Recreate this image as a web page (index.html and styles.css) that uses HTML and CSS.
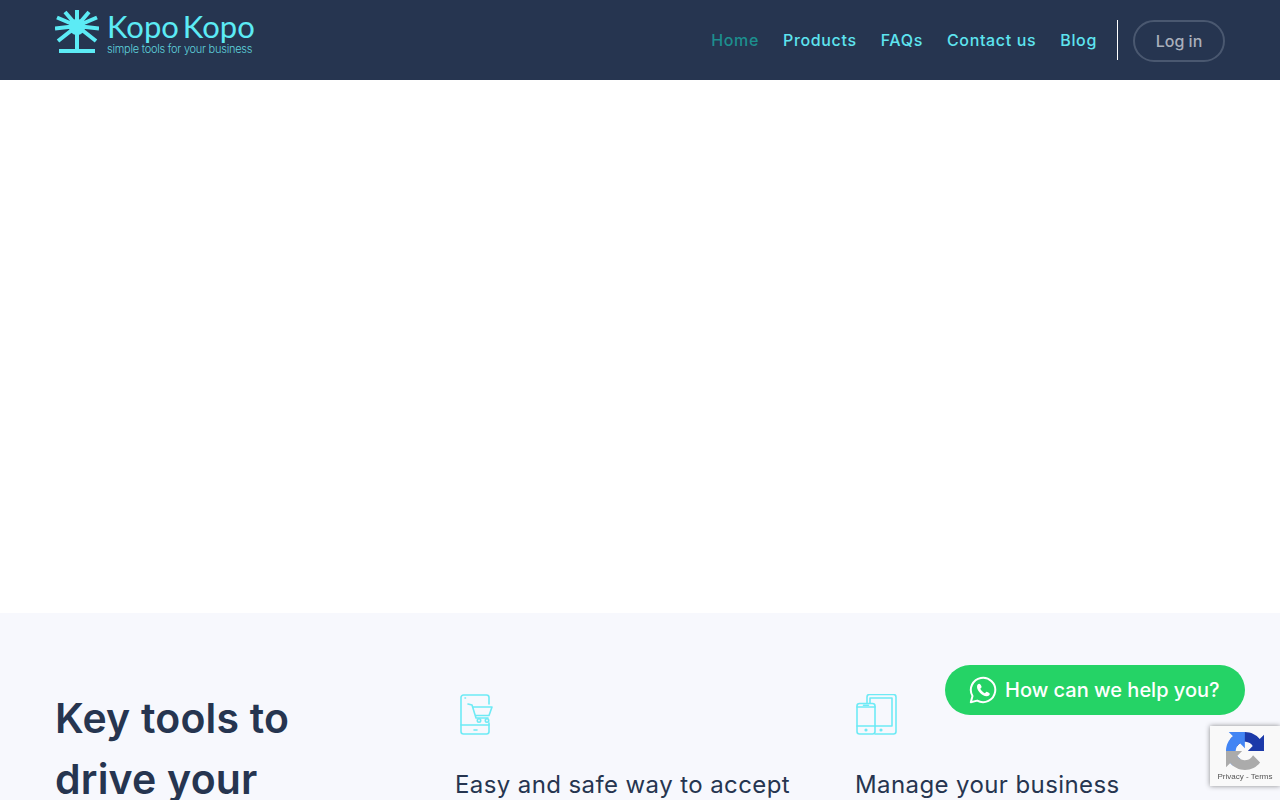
FILE: index.html
```html
<!DOCTYPE html>
<html lang="en">
<head>
  <meta charset="UTF-8" />
  <title>Kopo Kopo</title>
  <link rel="stylesheet" href="styles.css">
</head>
<body>
  <header class="topbar">
    <a class="brand" href="#">
      <svg class="brand-mark" viewBox="0 0 44 44" fill="none" stroke="#5cebf5" stroke-width="4">
        <path d="M22 0V41M22 16L10 2M22 16L34 2M22 16L2 7.500M22 16L42 7.500M22 16L0 18.500M22 16L44 18.500M22 16L3 31M22 16L41 31"/>
        <circle cx="22" cy="17" r="8" fill="#5cebf5" stroke="none"/>
        <path d="M4 41H40" stroke-width="4"/>
      </svg>
      <span class="brand-text">
        <span class="brand-name">Kopo Kopo</span>
        <span class="brand-tag">simple tools for your business</span>
      </span>
    </a>
    <nav class="nav">
      <a class="nav-link active" href="#">Home</a>
      <a class="nav-link" href="#">Products</a>
      <a class="nav-link" href="#">FAQs</a>
      <a class="nav-link" href="#">Contact us</a>
      <a class="nav-link" href="#">Blog</a>
      <span class="nav-divider"></span>
      <a class="login-btn" href="#">Log in</a>
    </nav>
  </header>

  <section class="hero"></section>

  <section class="tools">
    <h2 class="tools-title">Key tools to drive your</h2>
    <div class="tool">
      <svg class="tool-icon" viewBox="0 0 40 42" fill="none" stroke="#6eeaf5" stroke-width="1.600" stroke-linecap="round" stroke-linejoin="round">
        <path d="M34 10V3.500A2.500 2.500 0 0 0 31.500 1H8.500A2.500 2.500 0 0 0 6 3.500V37.500A2.500 2.500 0 0 0 8.500 40H31.500A2.500 2.500 0 0 0 34 37.500V29"/>
        <path d="M6 31H34M19 36H22M10 4H10.500"/>
        <path d="M13 10L17 11L21 24H33M18 13H37L34 21.500H20.500"/>
        <circle cx="24" cy="26.500" r="1.700"/>
        <circle cx="32" cy="26.500" r="1.700"/>
      </svg>
      <p class="tool-text">Easy and safe way to accept</p>
    </div>
    <div class="tool">
      <svg class="tool-icon" viewBox="0 0 42 42" fill="none" stroke="#6eeaf5" stroke-width="1.600" stroke-linecap="round" stroke-linejoin="round">
        <path d="M12 9V3A2.500 2.500 0 0 1 14.500 0.500H38.500A2.500 2.500 0 0 1 41 3V37.500A2.500 2.500 0 0 1 38.500 40H20"/>
        <path d="M15 9V4H37V32H20"/>
        <rect x="2" y="9.500" width="18" height="30.500" rx="2.500"/>
        <path d="M2 13H20M2 32H20M8.500 11.300H13.500"/>
        <circle cx="11" cy="36" r="0.800"/>
        <circle cx="26" cy="36" r="0.800"/>
      </svg>
      <p class="tool-text">Manage your business</p>
    </div>
  </section>

  <a class="whatsapp" href="#">
    <svg class="whatsapp-icon" viewBox="0 0 28 28" fill="none">
      <path d="M1.800 26.300L3.500 20A12.200 12.200 0 1 1 8.200 24.600Z" stroke="#fff" stroke-width="2" stroke-linejoin="round"/>
      <path d="M10.300 7.800C9.300 7.800 7.900 9 8 11C8.200 14.800 13 20 17.600 20.300C19.500 20.400 20.800 18.900 20.800 17.700C20.800 17 17.900 15.500 17.400 15.700L15.900 17.200C14.300 16.800 11.800 14.200 11.300 12.800L12.600 11.300C12.900 10.800 11.400 7.800 10.300 7.800Z" fill="#fff"/>
    </svg>
    How can we help you?
  </a>

  <div class="recaptcha">
    <svg class="recaptcha-logo" viewBox="0 0 64 64">
      <path d="M64 31.955l-.033-1.370V4.687l-7.160 7.160C50.948 4.674 42.033.093 32.050.093c-10.400 0-19.622 4.960-25.458 12.640l11.736 11.860a15.550 15.550 0 0 1 4.754-5.334c2.050-1.600 4.952-2.906 8.968-2.906.485 0 .860.057 1.135.163 4.976.393 9.290 3.140 11.830 7.124l-8.307 8.307c10.522-.040 22.400-.066 27.295 0" fill="#1c3aa9"/>
      <path d="M31.862.002l-1.370.033H4.594l7.160 7.160C4.580 13.055 0 21.970 0 31.954c0 10.400 4.960 19.622 12.640 25.458l11.860-11.736a15.550 15.550 0 0 1-5.334-4.754c-1.600-2.050-2.906-4.952-2.906-8.968 0-.485.057-.860.163-1.135.393-4.976 3.140-9.290 7.124-11.830l8.307 8.307c-.040-10.522-.066-22.400 0-27.295" fill="#4285f4"/>
      <path d="M0 32l.033 1.370v25.898l7.160-7.160C13.055 59.280 21.970 63.860 31.954 63.860c10.400 0 19.622-4.960 25.458-12.640L45.550 39.360a15.550 15.550 0 0 1-4.754 5.334c-2.050 1.600-4.952 2.906-8.968 2.906-.485 0-.860-.057-1.135-.163-4.976-.393-9.290-3.140-11.830-7.124l8.307-8.307c-10.522.040-22.400.066-27.295 0" fill="#ababab"/>
    </svg>
    <span class="recaptcha-links">Privacy - Terms</span>
  </div>
</body>
</html>
```

FILE: styles.css
```css
* {
  box-sizing: border-box;
}

html,
body {
  height: 800px;
  overflow: hidden;
}

body {
  margin: 0;
  font-family: Inter, "Open Sans", sans-serif;
  background: #fff;
  color: #263550;
}

a {
  text-decoration: none;
}

.topbar {
  height: 80px;
  padding: 0 55px;
  background: #263550;
  display: flex;
  justify-content: space-between;
  align-items: center;
}

.brand {
  display: flex;
  gap: 8px;
  margin-top: -14px;
}

.brand-mark {
  width: 44px;
  height: 44px;
}

.brand-text {
  display: flex;
  flex-direction: column;
}

.brand-name {
  font-family: Lato, sans-serif;
  font-weight: 400;
  font-size: 31px;
  line-height: 33px;
  word-spacing: -4px;
  color: #5cebf5;
  white-space: nowrap;
}

.brand-tag {
  font-size: 11px;
  line-height: 13px;
  font-weight: 300;
  letter-spacing: -0.25px;
  color: #5fd3dc;
  white-space: nowrap;
}

.nav {
  display: flex;
  align-items: center;
  gap: 24px;
}

.nav-link {
  font-size: 16px;
  font-weight: 500;
  letter-spacing: 0.65px;
  color: #5ee4ef;
}

.nav-link.active {
  color: #1c8f8e;
}

.nav-divider {
  width: 1px;
  height: 40px;
  background: #fff;
  margin-left: -4px;
  margin-right: -9px;
}

.login-btn {
  width: 92px;
  height: 42px;
  margin-top: 2px;
  border: 2px solid #4a5870;
  border-radius: 21px;
  display: flex;
  justify-content: center;
  align-items: center;
  font-size: 16px;
  font-weight: 500;
  color: #a9afbb;
}

.hero {
  height: 533px;
  background: #fff;
}

.tools {
  height: 300px;
  padding: 81px 55px 0;
  background: #f7f8fd;
  display: grid;
  grid-template-columns: 400px 400px 1fr;
  align-items: start;
}

.tools-title {
  margin: -6px 0 0;
  width: 260px;
  font-size: 41px;
  line-height: 61px;
  font-weight: 600;
  letter-spacing: 0.2px;
  color: #263550;
}

.tool-icon {
  display: block;
  height: 42px;
  margin-bottom: 31px;
}

.tool-text {
  margin: 0;
  font-size: 24px;
  line-height: 36px;
  letter-spacing: 0.4px;
  color: #263550;
}

.whatsapp {
  position: fixed;
  left: 945px;
  top: 665px;
  width: 300px;
  height: 50px;
  padding-left: 24px;
  border-radius: 25px;
  background: #25d366;
  color: #fff;
  font-size: 20px;
  font-weight: 500;
  display: flex;
  align-items: center;
  gap: 8px;
  white-space: nowrap;
}

.whatsapp-icon {
  width: 28px;
  height: 28px;
  flex: none;
}

.recaptcha {
  position: fixed;
  left: 1210px;
  top: 726px;
  width: 70px;
  height: 60px;
  background: #f9f9f9;
  box-shadow: 0 0 5px rgba(0, 0, 0, 0.45);
  display: flex;
  flex-direction: column;
  align-items: center;
  padding-top: 6px;
  gap: 2px;
}

.recaptcha-logo {
  width: 38px;
  height: 38px;
}

.recaptcha-links {
  font-family: "Liberation Sans", Arial, sans-serif;
  font-size: 8px;
  color: #555;
  white-space: nowrap;
}
```
